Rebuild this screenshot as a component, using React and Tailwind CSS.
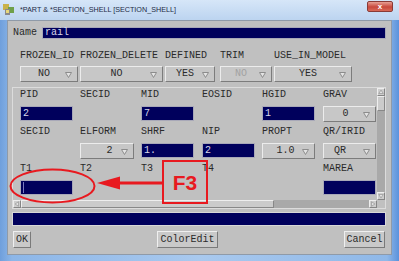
import React from "react";

const mono = "font-['Liberation_Mono','DejaVu_Sans_Mono',monospace]";

function Tri() {
  return (
    <svg width="7" height="6" viewBox="0 0 7 6" className="shrink-0">
      <polygon points="0.5,0.5 6.5,0.5 3.5,5.5" fill="#e4e4e4" stroke="#8c8c8c" strokeWidth="1" />
    </svg>
  );
}

function Drop({ w, value, disabled, pad = "pr-[10px]" }) {
  return (
    <div
      className={`${w} relative h-[16px] bg-[#c7c7c7] border border-t-[#ececec] border-l-[#ececec] border-b-[#7c7c7c] border-r-[#7c7c7c] flex items-center justify-center ${pad}`}
    >
      <span className={`${mono} text-[10px] leading-none ${disabled ? "text-[#a2a2a2]" : "text-[#2a2a2a]"}`}>{value}</span>
      <div className="absolute right-[5px] top-[5px]">
        <Tri />
      </div>
    </div>
  );
}

function Field({ w = "w-[53px]", value = "", cursor }) {
  return (
    <div className={`${w} h-[15px] bg-[#00005c] border border-[#a8a8b8] flex items-center pl-[2px]`}>
      {cursor && <div className="w-[1px] h-[11px] bg-[#7a7ac0]" />}
      <span className={`${mono} text-[10px] leading-none text-[#d6d6ea]`}>{value}</span>
    </div>
  );
}

function Label({ children }) {
  return <div className={`${mono} text-[10px] leading-[10px] h-[10px] text-[#2a2a2a] whitespace-nowrap`}>{children}</div>;
}

function Cell({ label, children }) {
  return (
    <div className="flex flex-col">
      <Label>{label}</Label>
      {children ? <div className="mt-[6px]">{children}</div> : null}
    </div>
  );
}

function Btn({ w, children }) {
  return (
    <div
      className={`${w} h-[17px] bg-[#c9c9c9] border border-t-[#efefef] border-l-[#efefef] border-b-[#7a7a7a] border-r-[#7a7a7a] flex items-center justify-center`}
    >
      <span className={`${mono} text-[10px] leading-none text-[#2a2a2a]`}>{children}</span>
    </div>
  );
}

function ArrowBox({ dir }) {
  const pts = {
    up: "1,6 4,1.5 7,6",
    down: "1,2 4,6.5 7,2",
    left: "6,1 1.5,4 6,7",
    right: "2,1 6.5,4 2,7",
  }[dir];
  return (
    <div className="w-[8px] h-[8px] bg-[#cdcdcd] border border-t-[#eeeeee] border-l-[#eeeeee] border-b-[#858585] border-r-[#858585] flex items-center justify-center">
      <svg width="8" height="8" viewBox="0 0 8 8">
        <polygon points={pts} fill="#e2e2e2" stroke="#8c8c8c" strokeWidth="0.8" />
      </svg>
    </div>
  );
}

export default function App() {
  return (
    <div className="relative w-[399px] h-[261px] overflow-hidden bg-[linear-gradient(90deg,#6f9fdc_0%,#8cb6e8_3%,#a9c9ee_50%,#8fb8e8_97%,#5b92dc_100%)] flex flex-col">
      {/* title bar */}
      <div className="h-[20px] flex items-start bg-[linear-gradient(180deg,#d6e6f8,#bcd4f0)]">
        <div className="mt-[4px] ml-[3px] w-[11px] h-[11px] relative shrink-0">
          <svg width="11" height="11" viewBox="0 0 11 11">
            <rect x="0" y="0" width="6" height="6" fill="#c9b24a" />
            <rect x="5" y="3" width="6" height="6" fill="#6fa04a" />
            <rect x="2" y="5" width="5" height="6" fill="#8a8a8a" />
            <rect x="3" y="6" width="3" height="3" fill="#e8d87a" />
          </svg>
        </div>
        <div className="ml-[6px] mt-[5px] font-['Liberation_Sans',Arial,sans-serif] text-[7.2px] leading-[10px] text-[#1d2a44] whitespace-nowrap">
          *PART &amp; *SECTION_SHELL [SECTION_SHELL]
        </div>
        <div className="ml-auto mr-[6px] mt-[1px] w-[26px] h-[11px] rounded-[2px] border border-[#8a3a36] bg-[linear-gradient(180deg,#e8a094,#c8483c_55%,#d86a58)] flex items-center justify-center">
          <span className="font-['Liberation_Sans',Arial,sans-serif] font-bold text-[8px] leading-none text-white">x</span>
        </div>
      </div>

      {/* body */}
      <div className="mx-[7px] w-[385px] h-[235px] bg-[#c0c0c0] border border-[#8f9aa8] pl-[4px] pr-[5px] flex flex-col">
        {/* Name row */}
        <div className="mt-[6px] h-[12px] flex items-center">
          <div className={`${mono} ml-[1px] w-[29px] text-[10px] leading-none text-[#2a2a2a]`}>Name</div>
          <div className="flex-1 h-[12px] bg-[#00005c] border border-[#a8a8b8] flex items-center pl-[2px]">
            <span className={`${mono} text-[10px] leading-none text-[#d6d6ea]`}>rail</span>
          </div>
        </div>

        {/* frozen row */}
        <div className="mt-[12px] pl-[8px] flex">
          <div className="w-[60px] flex flex-col">
            <Label>FROZEN_ID</Label>
            <div className="mt-[5px]"><Drop w="w-[58px]" value="NO" /></div>
          </div>
          <div className="w-[85px] flex flex-col">
            <Label>FROZEN_DELETE</Label>
            <div className="mt-[5px]"><Drop w="w-[83px]" value="NO" /></div>
          </div>
          <div className="w-[55px] flex flex-col">
            <Label>DEFINED</Label>
            <div className="mt-[5px]"><Drop w="w-[50px]" value="YES" /></div>
          </div>
          <div className="w-[54px] flex flex-col">
            <Label>TRIM</Label>
            <div className="mt-[5px]"><Drop w="w-[52px]" value="NO" disabled /></div>
          </div>
          <div className="w-[78px] flex flex-col">
            <Label>USE_IN_MODEL</Label>
            <div className="mt-[5px]"><Drop w="w-[78px]" value="YES" /></div>
          </div>
        </div>

        {/* panel */}
        <div className="mt-[5px] h-[122px] border border-[#dcdcdc] flex flex-col">
          <div className="flex h-[112px]">
            <div className="flex-1 pl-[7px] pt-[2px]">
              <div className="grid grid-cols-[60px_61px_61px_60px_61px_53px] gap-y-[5px]">
                <Cell label="PID"><Field value="2" /></Cell>
                <Cell label="SECID" />
                <Cell label="MID"><Field value="7" /></Cell>
                <Cell label="EOSID" />
                <Cell label="HGID"><Field value="1" /></Cell>
                <Cell label="GRAV"><Drop w="w-[53px]" value="0" pad="pr-[8px]" /></Cell>

                <Cell label="SECID" />
                <Cell label="ELFORM"><Drop w="w-[54px]" value="2" pad="pl-[5px]" /></Cell>
                <Cell label="SHRF"><Field value="1." /></Cell>
                <Cell label="NIP"><Field value="2" /></Cell>
                <Cell label="PROPT"><Drop w="w-[53px]" value="1.0" pad="pr-[6px]" /></Cell>
                <Cell label="QR/IRID"><Drop w="w-[53px]" value="QR" pad="pr-[19px]" /></Cell>

                <Cell label="T1"><Field cursor /></Cell>
                <Cell label="T2" />
                <Cell label="T3" />
                <Cell label="T4" />
                <Cell label="" />
                <Cell label="MAREA"><Field /></Cell>
              </div>
            </div>
            {/* vertical scrollbar */}
            <div className="w-[8px] flex flex-col">
              <ArrowBox dir="up" />
              <div className="h-[15px] bg-[#cbcbcb] border border-t-[#eeeeee] border-l-[#eeeeee] border-b-[#888888] border-r-[#888888]" />
              <div className="flex-1 bg-[#a9a9a9]" />
              <ArrowBox dir="down" />
            </div>
          </div>
          {/* horizontal scrollbar */}
          <div className="h-[8px] flex pr-[8px]">
            <ArrowBox dir="left" />
            <div className="w-[253px] bg-[#cbcbcb] border border-t-[#eeeeee] border-l-[#eeeeee] border-b-[#888888] border-r-[#888888]" />
            <div className="flex-1 bg-[#a9a9a9]" />
            <ArrowBox dir="right" />
          </div>
        </div>

        {/* status bar */}
        <div className="mt-[3px] h-[14px] bg-[#00005c] border border-[#d8d8d8]" />

        {/* buttons */}
        <div className="mt-[5px] flex pl-[1px] pr-[1px]">
          <Btn w="w-[18px]">OK</Btn>
          <div className="ml-[126px]">
            <Btn w="w-[61px]">ColorEdit</Btn>
          </div>
          <div className="ml-auto">
            <Btn w="w-[41px]">Cancel</Btn>
          </div>
        </div>
      </div>

      {/* annotation overlay */}
      <svg className="absolute left-0 top-0 pointer-events-none" width="399" height="261" viewBox="0 0 399 261">
        <ellipse cx="52.5" cy="186" rx="42" ry="16.5" fill="none" stroke="#e8191f" strokeWidth="2" />
        <line x1="116" y1="183" x2="162" y2="183" stroke="#e8191f" strokeWidth="3" />
        <polygon points="97,183 120,176.5 120,189.5" fill="#e8191f" />
      </svg>
      <div className="absolute left-[162px] top-[160px] w-[46px] h-[44px] border-2 border-[#e8191f] flex items-center justify-center">
        <span className="font-['Liberation_Sans',Arial,sans-serif] font-bold text-[21px] leading-none text-[#e8191f]">F3</span>
      </div>
    </div>
  );
}
